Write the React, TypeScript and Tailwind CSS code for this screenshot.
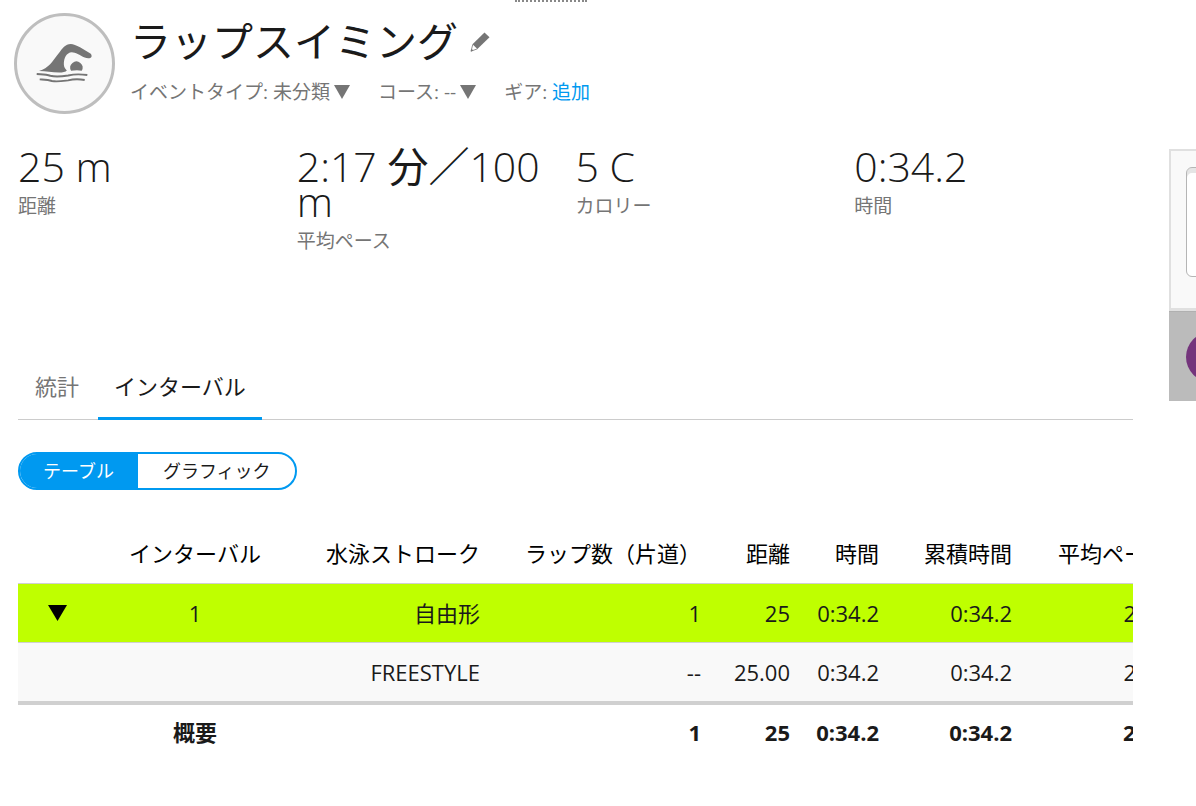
import { useState } from 'react';

interface IStat {
  value: string
  unit?: string
  rest?: string
  label: string
}

interface ILap {
  stroke: string
  laps: string
  distance: string
  time: string
  total: string
  pace: string
}

const stats: IStat[] = [
  { value: '25 m', label: '距離' },
  { value: '2:17 ', unit: '分／', rest: '100 m', label: '平均ペース' },
  { value: '5 C', label: 'カロリー' },
  { value: '0:34.2', label: '時間' },
];

const headers = ['水泳ストローク', 'ラップ数（片道）', '距離', '時間', '累積時間', '平均ペース'];

const interval: ILap = { stroke: '自由形', laps: '1', distance: '25', time: '0:34.2', total: '0:34.2', pace: '2:17' };
const length: ILap = { stroke: 'FREESTYLE', laps: '--', distance: '25.00', time: '0:34.2', total: '0:34.2', pace: '2:17' };
const summary: ILap = { stroke: '', laps: '1', distance: '25', time: '0:34.2', total: '0:34.2', pace: '2:17' };

function Caret() {
  return (
    <svg viewBox="0 0 16 14" className="w-4 h-[14px]" fill="currentColor" aria-hidden="true">
      <path d="M0 0h16L8 14z" />
    </svg>
  );
}

function SwimIcon() {
  return (
    <svg viewBox="108 125 176 130" className="w-[59px] h-[43px]" aria-hidden="true">
      <path
        fill="#757575"
        d="M119 213C148 205 160 183 178 160C190 144 198 131 215 131C222 131 232 135 243 141L273 159C280 163 280 174 271 174C267 175 262 174 257 172C242 165 229 156 218 156C202 157 194 174 194 192C194 201 199 206 203 211C200 216 190 217 180 217C158 217 140 214 119 213Z"
      />
      <path fill="#757575" d="M216 212A18.500 18.500 0 1 1 248 212C238 209 226 210 216 212Z" />
      <path
        fill="none"
        stroke="#757575"
        strokeWidth="6"
        d="M112 222C128 223 140 222 153 227C171 232 190 229 207 226C226 222 245 222 265 225M121 238C135 239 146 239 158 243C174 246 191 243 207 241C224 237 240 237 257 240"
      />
    </svg>
  );
}

function PencilIcon() {
  return (
    <svg viewBox="0 0 20 20" className="w-5 h-5" aria-hidden="true">
      <path fill="#757575" d="M14.5 0.400L19.500 5.200L7.400 17L2.500 12.200Z" />
      <path fill="none" stroke="#757575" strokeWidth="0.8" d="M2.800 12.400L1 19.200L7.400 16.800" />
      <path fill="#757575" d="M0.800 19.400L1.500 16.800L3.400 18.600Z" />
    </svg>
  );
}

function Cells(props: { lap: ILap }) {
  const { lap } = props;
  return (
    <>
      <td className="pr-[13px]">{lap.stroke}</td>
      <td className="pr-[13px]">{lap.laps}</td>
      <td className="pr-[13px]">{lap.distance}</td>
      <td className="pr-[13px]">{lap.time}</td>
      <td className="pr-[13px]">{lap.total}</td>
      <td className="pr-[13px]">{lap.pace}</td>
    </>
  );
}

function App() {
  const [open, setOpen] = useState(true);

  return (
    <div className="flex items-start overflow-hidden bg-white text-[#1a1a1a] font-['Open_Sans','Noto_Sans_CJK_JP',sans-serif]">
      <main className="flex-1 min-w-0 pl-[18px] pr-9">
        <div className="ml-[497px] w-[72px] border-t-2 border-dotted border-[#888888]" />

        <header className="flex mt-[11px] -ml-1">
          <div className="flex items-center justify-center shrink-0 w-[101px] h-[101px] rounded-full border-3 border-[#bebebe] bg-[#f9f9f9]">
            <SwimIcon />
          </div>
          <div className="ml-[15px]">
            <div className="flex items-center">
              <h1 className="text-[41px] leading-[56px]">ラップスイミング</h1>
              <button type="button" aria-label="名前を編集" className="ml-3 pt-[2px]">
                <PencilIcon />
              </button>
            </div>
            <div className="flex items-center mt-[9px] text-[19px] leading-7 text-[#757575]">
              <button type="button" className="flex items-center gap-1">
                イベントタイプ: 未分類 <Caret />
              </button>
              <button type="button" className="flex items-center gap-1 ml-7">
                コース: -- <Caret />
              </button>
              <p className="ml-7">
                ギア: <a href="#gear" className="text-[#0099f0]">追加</a>
              </p>
            </div>
          </div>
        </header>

        <section className="grid grid-cols-4 mt-[35px] h-[220px]">
          {stats.map((stat) => (
            <div key={stat.label}>
              <p className="text-[41px] leading-[35px] font-light">
                {stat.value}
                {stat.unit && <span className="font-normal">{stat.unit}</span>}
                {stat.rest}
              </p>
              <p className="mt-2 text-[19px] leading-7 text-[#757575]">{stat.label}</p>
            </div>
          ))}
        </section>

        <nav className="flex gap-[2px] border-b border-[#cccccc] text-[22px] leading-8">
          <a href="#stats" className="px-[17px] pt-px pb-[17px] text-[#757575]">統計</a>
          <a href="#intervals" className="px-4 pt-px pb-[15px] -mb-px border-b-3 border-[#0099f0]">インターバル</a>
        </nav>

        <div className="flex w-fit mt-8 h-[38px] border-2 border-[#0099f0] rounded-full overflow-hidden text-lg leading-8">
          <button type="button" className="pl-[23px] pr-6 bg-[#0099f0] text-white">テーブル</button>
          <button type="button" className="pl-[25px] pr-6">グラフィック</button>
        </div>

        <div className="mt-[33px] overflow-hidden">
          <table className="table-fixed w-[1162px] border-collapse text-right text-[22px] leading-8">
            <colgroup>
              <col className="w-[79px]" />
              <col className="w-[196px]" />
              <col className="w-[200px]" />
              <col className="w-[221px]" />
              <col className="w-[89px]" />
              <col className="w-[89px]" />
              <col className="w-[133px]" />
              <col className="w-[155px]" />
            </colgroup>
            <thead>
              <tr className="h-[60px] text-black">
                <td />
                <th className="font-normal text-center">インターバル</th>
                {headers.map((header) => (
                  <th key={header} className="pr-[13px] font-normal whitespace-nowrap">{header}</th>
                ))}
              </tr>
            </thead>
            <tbody>
              <tr className="h-[59px] border-t border-[#d0d0d0] bg-[#bfff00]">
                <td className="text-center">
                  <button
                    type="button"
                    aria-label="ラップを表示"
                    aria-expanded={open}
                    onClick={() => setOpen(!open)}
                    className="block mx-auto text-black"
                  >
                    <svg viewBox="0 0 19 16" className="w-[19px] h-4" fill="currentColor" aria-hidden="true">
                      <path d="M0 0h19L9.500 16z" />
                    </svg>
                  </button>
                </td>
                <td className="text-center">1</td>
                <Cells lap={interval} />
              </tr>
              {open && (
                <tr className="h-[61px] border-t border-[#d0d0d0] bg-[#f9f9f9]">
                  <td />
                  <td />
                  <Cells lap={length} />
                </tr>
              )}
            </tbody>
            <tfoot>
              <tr className="h-14 border-t-4 border-[#d0d0d0] font-bold">
                <td />
                <td className="text-center">概要</td>
                <Cells lap={summary} />
              </tr>
            </tfoot>
          </table>
        </div>
      </main>

      <aside className="w-[27px] shrink-0 mt-[149px] overflow-hidden">
        <div className="w-[300px] pl-[15px] pt-4 pb-[31px] border-2 border-b-3 border-[#e0e0e0] bg-[#f9f9f9]">
          <textarea
            aria-label="メモ"
            className="block w-[260px] h-[110px] resize-none rounded-md border border-[#b5b5b5] bg-white shadow-[inset_0_5px_0_#e5e5e5]"
          />
        </div>
        <div className="w-[300px] h-[90px] pl-[17px] pt-5 bg-[#bbbbbb] border-t border-[#b0b0b0]">
          <div className="w-[50px] h-[50px] rounded-full bg-[#74347c]" />
        </div>
      </aside>
    </div>
  );
}

export default App;
